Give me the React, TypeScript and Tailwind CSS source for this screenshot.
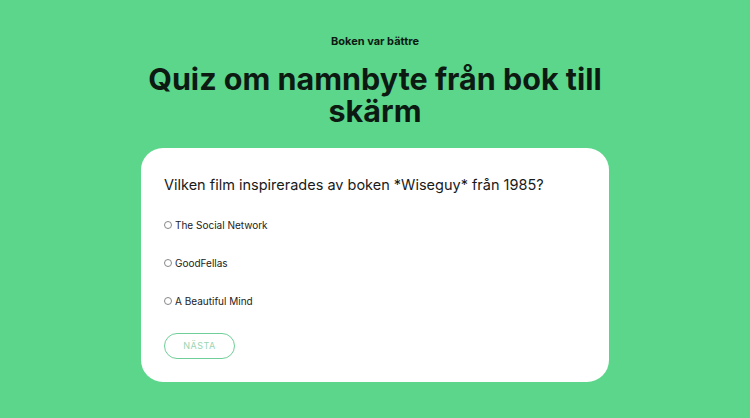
export default function App() {
  const options = ["The Social Network", "GoodFellas", "A Beautiful Mind"];

  return (
    <div className="flex h-[418px] w-[750px] flex-col items-center bg-[#5bd68b] pt-[34px] font-['Inter',sans-serif] text-[#0d1a12]">
      <p className="text-[11px] font-bold leading-[14px]">Boken var bättre</p>

      <h1 className="mt-[15px] w-[480px] text-center text-[30.5px] font-bold leading-[32px]">
        Quiz om namnbyte från bok till skärm
      </h1>

      <div className="mt-[21px] flex h-[234px] w-[468px] flex-col rounded-[22px] bg-white px-[23px] pt-[27px]">
        <h2 className="text-[14.5px] leading-[20px] text-[#1a1a1a]">
          Vilken film inspirerades av boken *Wiseguy* från 1985?
        </h2>

        <div className="mt-[22px] flex flex-col gap-[22px]">
          {options.map((option) => (
            <label key={option} className="flex h-[16px] items-center gap-[3px] text-[10px] text-[#222]">
              <span className="h-[8px] w-[8px] rounded-full border border-[#888]"></span>
              <span>{option}</span>
            </label>
          ))}
        </div>

        <button className="mt-[24px] flex h-[26px] w-[71px] items-center justify-center rounded-full border-[1.5px] border-[#6fcf98] text-[9px] tracking-[0.05em] text-[#9ad5b4]">
          NÄSTA
        </button>
      </div>
    </div>
  );
}
